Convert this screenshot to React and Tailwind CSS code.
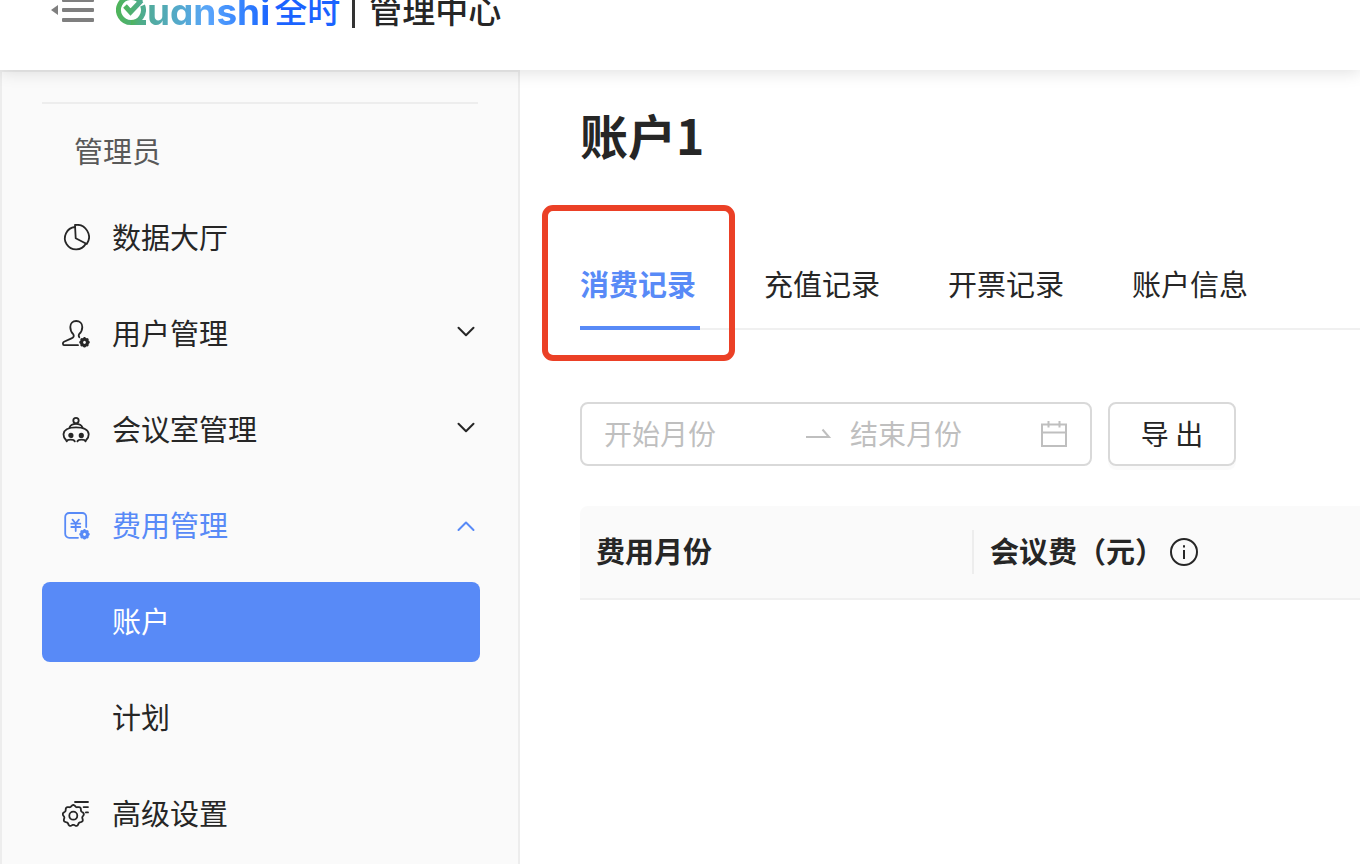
import React from 'react';

const gearPath = (cx, cy, radius, depth, teeth) => {
  const points = [];
  for (let i = 0; i < 96; i++) {
    const angle = (i / 96) * Math.PI * 2;
    const r = radius + depth * Math.cos(angle * teeth);
    points.push(`${(cx + r * Math.sin(angle)).toFixed(2)} ${(cy - r * Math.cos(angle)).toFixed(2)}`);
  }
  return `M${points.join('L')}Z`;
};

const Icon = ({ children }) => (
  <svg
    viewBox="0 0 28 28"
    className="w-7 h-7 flex-shrink-0"
    fill="none"
    stroke="currentColor"
    strokeWidth="1.8"
    strokeLinecap="round"
    strokeLinejoin="round"
    aria-hidden="true"
  >
    {children}
  </svg>
);

const SmallGear = () => <path d={gearPath(22.5, 22.3, 3.3, 0.8, 8)} strokeWidth="2.4" />;

const PieIcon = () => (
  <Icon>
    <path d="M13 3A11.2 11.2 0 1 0 23.8 19.7" />
    <path d="M13 1A12.2 12.2 0 0 1 24.8 20L13.7 14.2Z" />
  </Icon>
);

const UserIcon = () => (
  <Icon>
    <path d="M16 25.2H2.5C.6 25.2.4 22.6 2 21.8L9.5 18.4C11.7 17.4 12.3 16 11.2 14.2C9.2 12.2 8.3 9.6 8.3 7C8.3 3.3 10.8 1 14.2 1S20.3 3.3 20.3 7C20.3 10 19 12.5 17.1 14.2C16.5 15.4 16.6 16.3 17.3 17.2" />
    <SmallGear />
  </Icon>
);

const RoomIcon = () => (
  <Icon>
    <circle cx="14" cy="4.6" r="2.7" />
    <path d="M7.6 11.3C8.6 9 11 7.9 14 7.9S19.4 9 20.4 11.3" />
    <path d="M4 24C2.2 22.4 1.5 20.4 1.5 18.2C2 13.4 6.4 11.4 14 11.4S26.2 13.4 26.7 18.2C26.7 20.4 26 22.4 24.2 24" />
    <circle cx="8.9" cy="19.4" r="1.7" fill="currentColor" />
    <circle cx="19.3" cy="19.4" r="1.7" fill="currentColor" />
    <path d="M4.6 25.4C5.4 23 11.8 23 12.8 25.4M15.4 25.4C16.4 23 22.8 23 23.6 25.4" />
  </Icon>
);

const FeeIcon = () => (
  <Icon>
    <path d="M16 25.8H7.2A4 4 0 0 1 3.2 21.8V5A4 4 0 0 1 7.2 1H20.2A4 4 0 0 1 24.2 5V15" />
    <path d="M10.5 7.6L13.7 11.5L16.9 7.6M9.3 11.7H18.3M9.3 15H18.3M13.7 11.7V19" />
    <SmallGear />
  </Icon>
);

const SettingsIcon = () => (
  <Icon>
    <path d={gearPath(11.3, 15.7, 9.9, 0.8, 9)} />
    <circle cx="11.3" cy="15.7" r="4" />
    <path d="M13 2H26M21.6 7.1H26M23.9 12.4H26" />
  </Icon>
);

const Chevron = ({ up }) => (
  <svg viewBox="0 0 20 20" className="w-5 h-5" fill="none" stroke="currentColor" strokeWidth="2" strokeLinecap="round" strokeLinejoin="round" aria-hidden="true">
    <path d={up ? 'M2.5 14L10 6.5L17.5 14' : 'M2.5 3.8L10 11.3L17.5 3.8'} />
  </svg>
);

const MENU = [
  { label: '数据大厅', icon: PieIcon },
  { label: '用户管理', icon: UserIcon, open: false },
  { label: '会议室管理', icon: RoomIcon, open: false },
  {
    label: '费用管理',
    icon: FeeIcon,
    open: true,
    children: [{ label: '账户', selected: true }, { label: '计划' }],
  },
  { label: '高级设置', icon: SettingsIcon },
];

const TABS = ['消费记录', '充值记录', '开票记录', '账户信息'];

const Header = () => (
  <header className="relative z-10 h-[70px] pb-[50px] pl-[50px] flex items-center bg-white shadow-[0_2px_16px_rgba(0,0,0,0.13)]">
    <button type="button" aria-label="收起菜单" className="flex-shrink-0 text-[#7f7f7f]">
      <svg viewBox="0 0 46 28" className="w-[46px] h-7" fill="currentColor" aria-hidden="true">
        <path d="M1 14L8 9V19Z" />
        <rect x="12" y="2" width="32" height="4" rx="1" />
        <rect x="12" y="12" width="32" height="4" rx="1" />
        <rect x="12" y="22" width="32" height="4" rx="1" />
      </svg>
    </button>
    <a href="#" className="ml-5 flex items-center">
      <svg viewBox="0 0 30 32" className="w-[30px] h-8" fill="none" aria-hidden="true">
        <defs>
          <linearGradient id="logo-q" x1="0" y1="0" x2="1" y2="0">
            <stop offset="0" stopColor="#4fb45c" />
            <stop offset="1" stopColor="#4fab92" />
          </linearGradient>
        </defs>
        <path d="M25 8.5A12.5 12.5 0 1 0 15 28.5H30" stroke="url(#logo-q)" strokeWidth="5" />
        <path d="M15 28.5A12.5 12.5 0 0 0 26.6 11.5" stroke="url(#logo-q)" strokeWidth="5" />
        <path d="M9 12L14.5 18L25.5 6.5" stroke="url(#logo-q)" strokeWidth="5" />
      </svg>
      <span className="pt-[3px] ml-px text-[37px] leading-10 font-bold font-[Inter,sans-serif] [font-feature-settings:'cv11'] bg-gradient-to-r from-[#52ab98] via-[#5aa5fb] to-[#1a63ff] bg-clip-text text-transparent">
        uanshi
      </span>
      <span className="pb-[3px] ml-1 text-[33px] leading-10 font-medium text-[#1a63ff]">全时</span>
    </a>
    <span className="ml-3 w-[3px] h-9 bg-[#333]" />
    <span className="pb-[3px] ml-[14px] text-[33px] leading-10 font-medium text-[#262626]">管理中心</span>
  </header>
);

const MenuRow = ({ item }) => {
  const ItemIcon = item.icon;
  return (
    <li>
      <button
        type="button"
        aria-expanded={item.open}
        className={`w-full h-20 pl-5 pr-1 flex items-center text-[29px] leading-10 ${item.open ? 'text-[#588af7]' : 'text-[#262626]'}`}
      >
        <ItemIcon />
        <span className="ml-[22px] mr-auto pb-1">{item.label}</span>
        {item.open !== undefined && <Chevron up={item.open} />}
      </button>
      {item.children && (
        <ul className="mt-4 space-y-4">
          {item.children.map((child) => (
            <li key={child.label}>
              <a
                href="#"
                className={`h-20 pl-[70px] pb-1 flex items-center rounded-lg text-[29px] leading-10 ${child.selected ? 'bg-[#588af7] text-white' : 'text-[#262626]'}`}
              >
                {child.label}
              </a>
            </li>
          ))}
        </ul>
      )}
    </li>
  );
};

const Sidebar = () => (
  <aside className="w-[520px] flex-shrink-0 px-[38px] pt-[30px] border-x-2 border-t-2 border-[#ededed] bg-[#fafafa]">
    <div className="ml-[2px]">
      <hr className="mr-[2px] border-t-2 border-[#ededed]" />
      <h2 className="mt-[26px] pl-8 text-[29px] leading-10 text-[#595959]">管理员</h2>
      <nav className="mt-7">
        <ul className="space-y-4">
          {MENU.map((item) => (
            <MenuRow key={item.label} item={item} />
          ))}
        </ul>
      </nav>
    </div>
  </aside>
);

const Filters = () => (
  <div className="mt-[72px] flex gap-4">
    <div className="w-[512px] h-16 px-[22px] flex items-center border-2 border-[#d9d9d9] rounded-lg text-[#bfbfbf]">
      <input
        type="text"
        aria-label="开始月份"
        placeholder="开始月份"
        className="w-[200px] pb-[2px] text-[28px] leading-10 outline-none text-[#262626] placeholder:text-[#bfbfbf]"
      />
      <svg viewBox="0 0 28 28" className="w-7 h-7 flex-shrink-0" fill="none" stroke="currentColor" strokeWidth="2" aria-hidden="true">
        <path d="M2 17H25L18.5 9.5" />
      </svg>
      <input
        type="text"
        aria-label="结束月份"
        placeholder="结束月份"
        className="ml-[18px] w-[170px] pb-[2px] text-[28px] leading-10 outline-none text-[#262626] placeholder:text-[#bfbfbf]"
      />
      <svg viewBox="0 0 28 28" className="ml-auto w-7 h-7 flex-shrink-0" fill="none" stroke="currentColor" strokeWidth="2" aria-hidden="true">
        <path d="M2 4.5H26V26H2ZM2 12.5H26M8.5 1V7.5M19.5 1V7.5" />
      </svg>
    </div>
    <button
      type="button"
      className="w-32 h-16 pb-[2px] border-2 border-[#d9d9d9] rounded-lg shadow-[0_4px_0_rgba(0,0,0,0.02)] text-[28px] leading-10 text-[#262626]"
    >
      导 出
    </button>
  </div>
);

const FeeTable = () => (
  <table className="mt-10 w-full border-separate border-spacing-0 text-[29px] leading-10 text-[#262626]">
    <thead>
      <tr className="bg-[#fafafa] text-left">
        <th className="w-[394px] h-[94px] p-0 pl-4 border-b-2 border-[#f0f0f0] rounded-tl-lg font-bold">
          <div className="h-11 pb-1 flex items-center border-r-2 border-[#ededed]">费用月份</div>
        </th>
        <th className="p-0 pl-4 border-b-2 border-[#f0f0f0] font-bold">
          <div className="flex items-center">
            <span className="pb-1">会议费（元）</span>
            <svg viewBox="0 0 28 28" className="ml-[6px] w-7 h-7" fill="none" stroke="currentColor" strokeWidth="2" role="img" aria-label="说明">
              <circle cx="14" cy="14" r="13" />
              <path d="M14 12V21M14 7.2V9.4" />
            </svg>
          </div>
        </th>
      </tr>
    </thead>
  </table>
);

const App = () => (
  <div className="min-h-screen flex flex-col bg-white font-['Noto_Sans_CJK_SC',sans-serif]">
    <Header />
    <div className="flex-1 flex">
      <Sidebar />
      <main className="flex-1 min-w-0 pl-[60px] pt-8">
        <h1 className="text-[48px] leading-[64px] font-bold text-[#262626]">账户1</h1>
        <div role="tablist" className="mt-[74px] flex gap-16 border-b-2 border-[#f0f0f0]">
          {TABS.map((tab, index) => (
            <div key={tab} className="relative">
              <button
                type="button"
                role="tab"
                aria-selected={index === 0}
                className={`w-[120px] h-[90px] -mb-[2px] text-left text-[29px] leading-10 whitespace-nowrap border-b-4 ${index === 0 ? 'font-bold text-[#588af7] border-[#588af7]' : 'text-[#262626] border-transparent'}`}
              >
                {tab}
              </button>
              {index === 0 && (
                <span className="absolute -left-[38px] -right-[35px] -top-[35px] -bottom-[33px] border-6 border-[#eb4026] rounded-[11px] pointer-events-none" />
              )}
            </div>
          ))}
        </div>
        <Filters />
        <FeeTable />
      </main>
    </div>
  </div>
);

export default App;
